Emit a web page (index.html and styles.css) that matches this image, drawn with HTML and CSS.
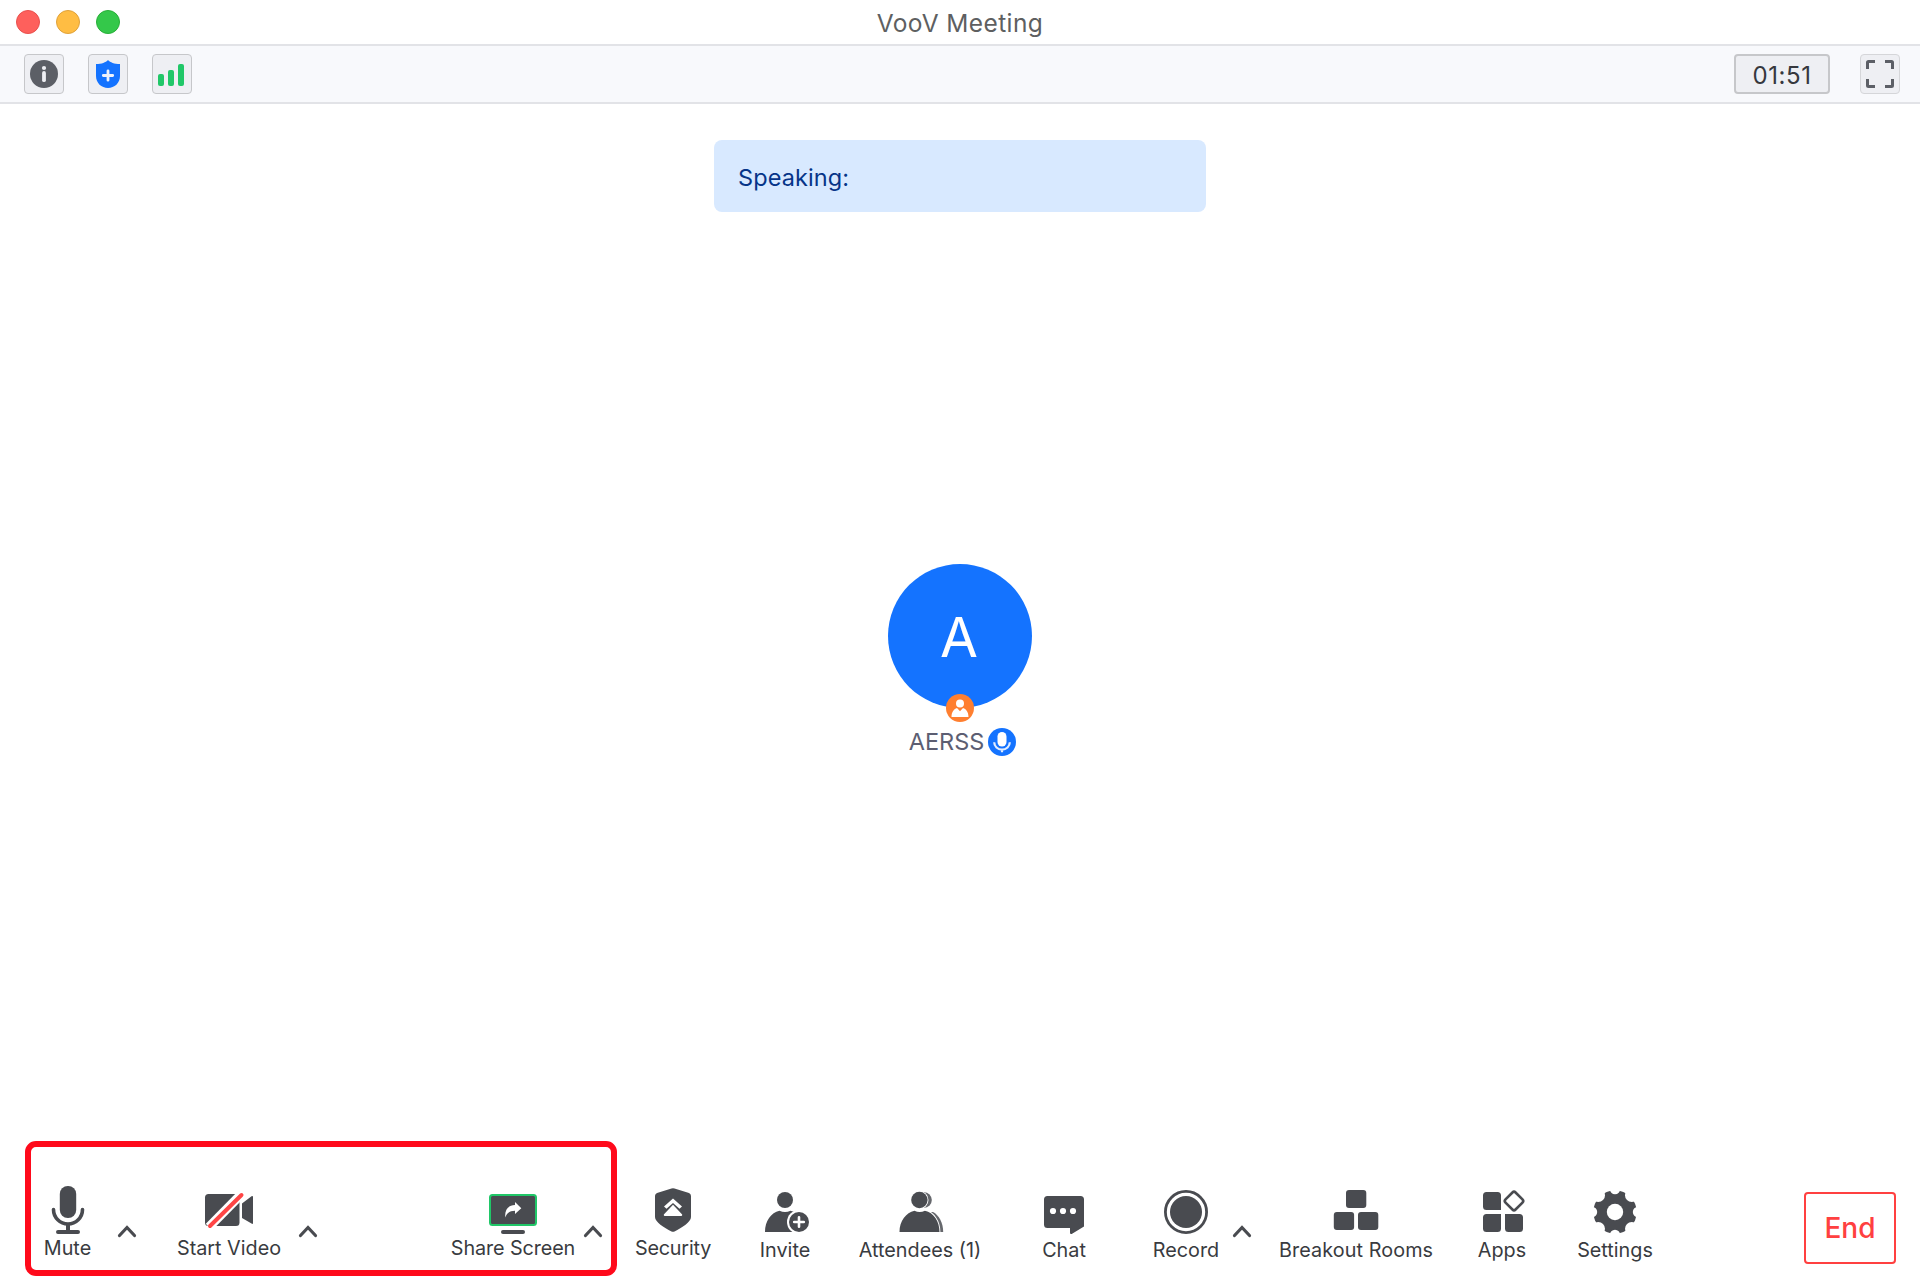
FILE: index.html
```html
<!DOCTYPE html>
<html lang="en">
<head>
<meta charset="utf-8">
<title>VooV Meeting</title>
<link rel="stylesheet" href="styles.css">
</head>
<body>
<div class="window">
  <header class="titlebar">
    <div class="lights"><i class="light close"></i><i class="light minimize"></i><i class="light zoom"></i></div>
    <h1 class="title"><span>VooV Meeting</span></h1>
  </header>
  <nav class="topbar">
    <button class="chip"><svg width="28" height="28" viewBox="0 0 28 28"><circle cx="14" cy="14" r="14" fill="#5c5f66"/><circle cx="14" cy="8" r="2.1" fill="#eeeff3"/><path d="M14 13v7.2" stroke="#eeeff3" stroke-width="3.8" stroke-linecap="round"/></svg></button>
    <button class="chip"><svg width="28" height="28" viewBox="0 0 28 28"><path d="M14 0C16.5 2.5 20 4 26 4V16C26 23 20.5 28 14 28S2 23 2 16V4C8 4 11.500 2.500 14 0Z" fill="#1473ff"/><path d="M14 10.800v9.400M9.300 15.500h9.400" stroke="#eef2fb" stroke-width="2.800" stroke-linecap="round"/></svg></button>
    <button class="chip"><svg width="28" height="28" viewBox="0 0 28 28"><g fill="#20c768"><rect x="0" y="14" width="6" height="12" rx="2"/><rect x="10" y="10" width="6" height="16" rx="2"/><rect x="20" y="4" width="6" height="22" rx="2"/></g></svg></button>
    <div class="timer"><span>01:51</span></div>
    <button class="chip pale"><svg width="28" height="28" viewBox="0 0 28 28" fill="none" stroke="#5c5f66" stroke-width="3"><path d="M1.500 9V2.500Q1.500 1.500 2.500 1.500H9M19 1.500h6.500q1 0 1 1V9M26.500 19v6.500q0 1-1 1H19M9 26.500H2.500q-1 0-1-1V19"/></svg></button>
  </nav>
  <main class="stage">
    <div class="speaking"><span>Speaking:</span></div>
    <section class="member">
      <div class="avatar"><span>A</span>
        <svg class="role" width="28" height="28" viewBox="0 0 28 28"><circle cx="14" cy="14" r="14" fill="#ff7f30"/><g fill="#fff"><circle cx="14" cy="9.500" r="4"/><path d="M5.500 23C5.500 18 8 14.800 11 14L14 17.200 17 14C20 14.800 22.500 18 22.500 23Z"/></g></svg>
      </div>
      <div class="member-name"><span>AERSS</span>
        <svg width="28" height="28" viewBox="0 0 28 28"><circle cx="14" cy="14" r="14" fill="#1473ff"/><rect x="9.500" y="4" width="9" height="14.500" rx="4.500" fill="#fff"/><path d="M6.200 14.300a7.800 7.300 0 0 0 15.600 0M14 21.600V24.300" fill="none" stroke="#e3eeff" stroke-width="2.200"/></svg>
      </div>
    </section>
  </main>
  <footer class="toolbar">
    <button class="tool mute"><svg viewBox="0 0 56 52"><rect x="19.800" y="2" width="16.400" height="32" rx="8"/><path d="M13.500 25.500a14.500 14.500 0 0 0 29 0" fill="none" stroke="#494b50" stroke-width="3.600" stroke-linecap="round"/><path d="M28 41v6M18 48h20" fill="none" stroke="#494b50" stroke-width="4" stroke-linecap="round"/></svg><span>Mute</span></button>
    <button class="more"><svg viewBox="0 0 24 14"><path d="M4.500 11.500 12 3.500l7.500 8"/></svg></button>
    <button class="tool video"><svg viewBox="0 0 56 52"><rect x="4" y="10" width="34.500" height="32" rx="3.500"/><path d="M41 19.500 50.500 12.300Q52 11.500 52 13V39Q52 40.500 50.500 39.500L41 34Z"/><path d="M41.500 9 8 43" stroke="#fff" stroke-width="9"/><path d="M40.500 11 9 42" stroke="#ff4545" stroke-width="4" stroke-linecap="round"/></svg><span>Start Video</span></button>
    <button class="more"><svg viewBox="0 0 24 14"><path d="M4.500 11.500 12 3.500l7.500 8"/></svg></button>
    <button class="tool share"><svg viewBox="0 0 56 52"><rect x="5" y="11" width="46" height="30" rx="2.500" stroke="#20c768" stroke-width="2"/><rect x="16" y="46" width="24" height="4" rx="2"/><path d="M20.300 33.500C19.500 26 23 21.300 30 21V18L36.300 24.200 30 30V26.700C25 26.700 21.500 29 20.300 33.500Z" fill="#fff"/></svg><span>Share Screen</span></button>
    <button class="more"><svg viewBox="0 0 24 14"><path d="M4.500 11.500 12 3.500l7.500 8"/></svg></button>
    <button class="tool security"><svg viewBox="0 0 56 52"><path d="M26.500 4.400Q28 3.900 29.500 4.400L44 9Q46 9.800 46 12V33C46 38 37 43.500 29.500 47.500Q28 48.200 26.500 47.500C19 43.500 10 38 10 33V12Q10 9.800 12 9Z"/><path d="M28 14.500 37 22.500 34.500 24.800 28 19 21.500 24.800 19 22.500ZM28 20.800 37.200 30.500Q37.500 32 36 32H20Q18.500 32 18.800 30.500Z" fill="#fff"/></svg><span>Security</span></button>
    <button class="tool low invite"><svg viewBox="0 0 56 52"><circle cx="28" cy="16" r="8"/><path d="M8 48C8 37 14 28.500 22.500 26.700Q28 29.500 33.500 26.700C42 28.500 48 37 48 48Z"/><circle cx="42" cy="38" r="12" fill="#fff"/><circle cx="42" cy="38" r="10"/><path d="M42 33.200v9.600M37.200 38h9.600" stroke="#fff" stroke-width="2.600" stroke-linecap="round"/></svg><span>Invite</span></button>
    <button class="tool low attendees"><svg viewBox="0 0 56 52"><g fill="#66686d"><circle cx="32" cy="16" r="7.800"/><path d="M25 48V28H41C47 31 51.200 39 51.200 48Z"/></g><g stroke="#fff" stroke-width="1.800" paint-order="stroke"><circle cx="27.400" cy="16" r="8.200"/><path d="M7.500 48C7.500 37 14 28.500 22.500 26.700Q27.500 29.500 33 26.700C41.500 28.500 47.500 37 47.500 48Z"/></g><path d="M33 26.500 41 28 34 24.500Z" fill="#fff"/></svg><span>Attendees (1)</span></button>
    <button class="tool low chat"><svg viewBox="0 0 56 52"><path d="M11.500 12H44.500Q48 12 48 15.500V42.500L36.500 49.500Q34 51 34 48.500V44H11.500Q8 44 8 40.500V15.500Q8 12 11.500 12Z"/><g fill="#fff"><circle cx="17" cy="27" r="3.100"/><circle cx="27" cy="27" r="3.100"/><circle cx="37" cy="27" r="3.100"/></g></svg><span>Chat</span></button>
    <button class="tool low record"><svg viewBox="0 0 56 52"><circle cx="28" cy="28" r="20.600" fill="none" stroke="#494b50" stroke-width="2.800"/><circle cx="28" cy="28" r="16"/></svg><span>Record</span></button>
    <button class="more"><svg viewBox="0 0 24 14"><path d="M4.500 11.500 12 3.500l7.500 8"/></svg></button>
    <button class="tool low breakout"><svg viewBox="0 0 56 52"><rect x="18" y="6" width="20.300" height="18" rx="3"/><rect x="5.800" y="28" width="20.300" height="18" rx="3"/><rect x="30" y="28" width="20.300" height="18" rx="3"/></svg><span>Breakout Rooms</span></button>
    <button class="tool low apps"><svg viewBox="0 0 56 52"><path d="M12.500 8H23.500Q27 8 27 11.500V26H12.500Q9 26 9 22.500V11.500Q9 8 12.500 8ZM12.500 30H27V44.500Q27 48 23.500 48H12.500Q9 48 9 44.500V33.500Q9 30 12.500 30ZM31 30H45.500Q49 30 49 33.500V44.500Q49 48 45.500 48H34.500Q31 48 31 44.500Z"/><rect x="32.900" y="9.900" width="14.200" height="14.200" rx="2.200" transform="rotate(45 40 17)" fill="none" stroke="#494b50" stroke-width="2.600"/></svg><span>Apps</span></button>
    <button class="tool low settings"><svg viewBox="0 0 56 52"><mask id="gear"><rect width="56" height="52" fill="#fff"/><circle cx="28" cy="28" r="8.200" fill="#000"/><g fill="#000"><circle cx="28" cy="5" r="5.200"/><circle cx="28" cy="51" r="5.200"/><circle cx="5" cy="28" r="5.200"/><circle cx="51" cy="28" r="5.200"/><circle cx="11.200" cy="11.200" r="6.800"/><circle cx="44.800" cy="11.200" r="6.800"/><circle cx="11.200" cy="44.800" r="6.800"/><circle cx="44.800" cy="44.800" r="6.800"/></g></mask><circle cx="28" cy="28" r="21.700" mask="url(#gear)"/></svg><span>Settings</span></button>
    <button class="end"><span>End</span></button>
  </footer>
  <div class="highlight"></div>
</div>
</body>
</html>
```
FILE: styles.css
```css
* { box-sizing: border-box; }
body { margin: 0; background: #fff; font-family: Inter, "Liberation Sans", sans-serif; }
button { margin: 0; padding: 0; border: 0; background: none; font: inherit; color: inherit; }
svg { display: block; flex: none; }
.window { position: relative; width: 1920px; height: 1280px; overflow: hidden; display: flex; flex-direction: column; }

.titlebar { height: 46px; flex: none; border-bottom: 2px solid #e2e3e7; display: grid; grid-template-columns: 1fr auto 1fr; align-items: center; padding-left: 16px; padding-right: 16px; }
.lights { display: flex; gap: 16px; }
.light { width: 24px; height: 24px; border-radius: 50%; border: 1px solid; }
.close { background: #fe605c; border-color: #e9504d; }
.minimize { background: #ffbd43; border-color: #e0a23a; }
.zoom { background: #34c84a; border-color: #28af38; }
.title { margin: 0; font-size: 24.500px; line-height: 30px; font-weight: 400; color: #5e5f61; padding-top: 2px; letter-spacing: .4px; }

.topbar { height: 58px; flex: none; background: #f8f9fc; border-bottom: 2px solid #e2e3e7; display: flex; align-items: center; gap: 24px; padding: 0 20px 0 24px; }
.chip { width: 40px; height: 40px; background: #eeeff3; border: 1px solid #c6c7ca; border-radius: 4px; display: flex; align-items: center; justify-content: center; }
.pale { border-color: #d5d6d9; }
.timer { width: 96px; height: 40px; margin-left: auto; margin-right: 6px; background: #eeeff3; border: 2px solid #c6c7ca; border-radius: 4px; display: flex; align-items: center; justify-content: center; font-size: 24px; line-height: 30px; color: #36383e; padding-top: 4px; letter-spacing: .6px; }

.stage { flex: 1; display: flex; flex-direction: column; align-items: center; padding-top: 36px; }
.speaking { width: 492px; height: 72px; border-radius: 8px; background: #d8e9ff; color: #063488; font-size: 23.500px; line-height: 30px; padding: 23px 24px 0; letter-spacing: .1px; }
.member { margin-top: 352px; display: flex; flex-direction: column; align-items: center; }
.avatar { position: relative; width: 144px; height: 144px; border-radius: 50%; background: #1473ff; color: #fff; font-size: 55px; line-height: 146px; text-align: center; padding-right: 2px; }
.role { position: absolute; left: 58px; top: 130px; }
.member-name { margin-top: 20px; padding-left: 5px; display: flex; align-items: center; gap: 4px; font-size: 23.500px; line-height: 28px; color: #5c5e72; }

.toolbar { height: 96px; flex: none; display: flex; align-items: flex-start; padding-left: 20px; color: #393b40; }
.tool { display: flex; flex-direction: column; align-items: center; flex: none; font-size: 19.800px; line-height: 24px; white-space: nowrap; }
.tool svg { width: 56px; height: 52px; fill: #494b50; }
.low svg { margin-bottom: 2px; }
.more { width: 24px; margin-top: 40px; flex: none; }
.more svg { width: 24px; height: 14px; fill: none; stroke: #494b50; stroke-width: 3.2; stroke-linecap: round; }
.mute { width: 95px; }
.video { width: 134px; margin-left: 23px; }
.share { width: 136px; margin-left: 125px; letter-spacing: -.1px; }
.security { width: 96px; margin-left: 20px; letter-spacing: -.2px; }
.invite { width: 100px; margin-left: 14px; }
.attendees { width: 130px; margin-left: 20px; }
.chat { width: 80px; margin-left: 39px; }
.record { width: 88px; margin-left: 38px; }
.breakout { width: 170px; margin-left: 17px; letter-spacing: .1px; }
.apps { width: 80px; margin-left: 21px; }
.settings { width: 100px; margin-left: 23px; }
.end { width: 92px; height: 72px; margin: 8px 24px 0 auto; border: 2px solid #ff4040; border-radius: 4px; color: #ff4040; font-size: 28px; line-height: 34px; font-weight: 500; }

.highlight { position: absolute; left: 25px; top: 1141px; width: 592px; height: 135px; border: 6px solid #ff0a1b; border-radius: 11px; }
```
